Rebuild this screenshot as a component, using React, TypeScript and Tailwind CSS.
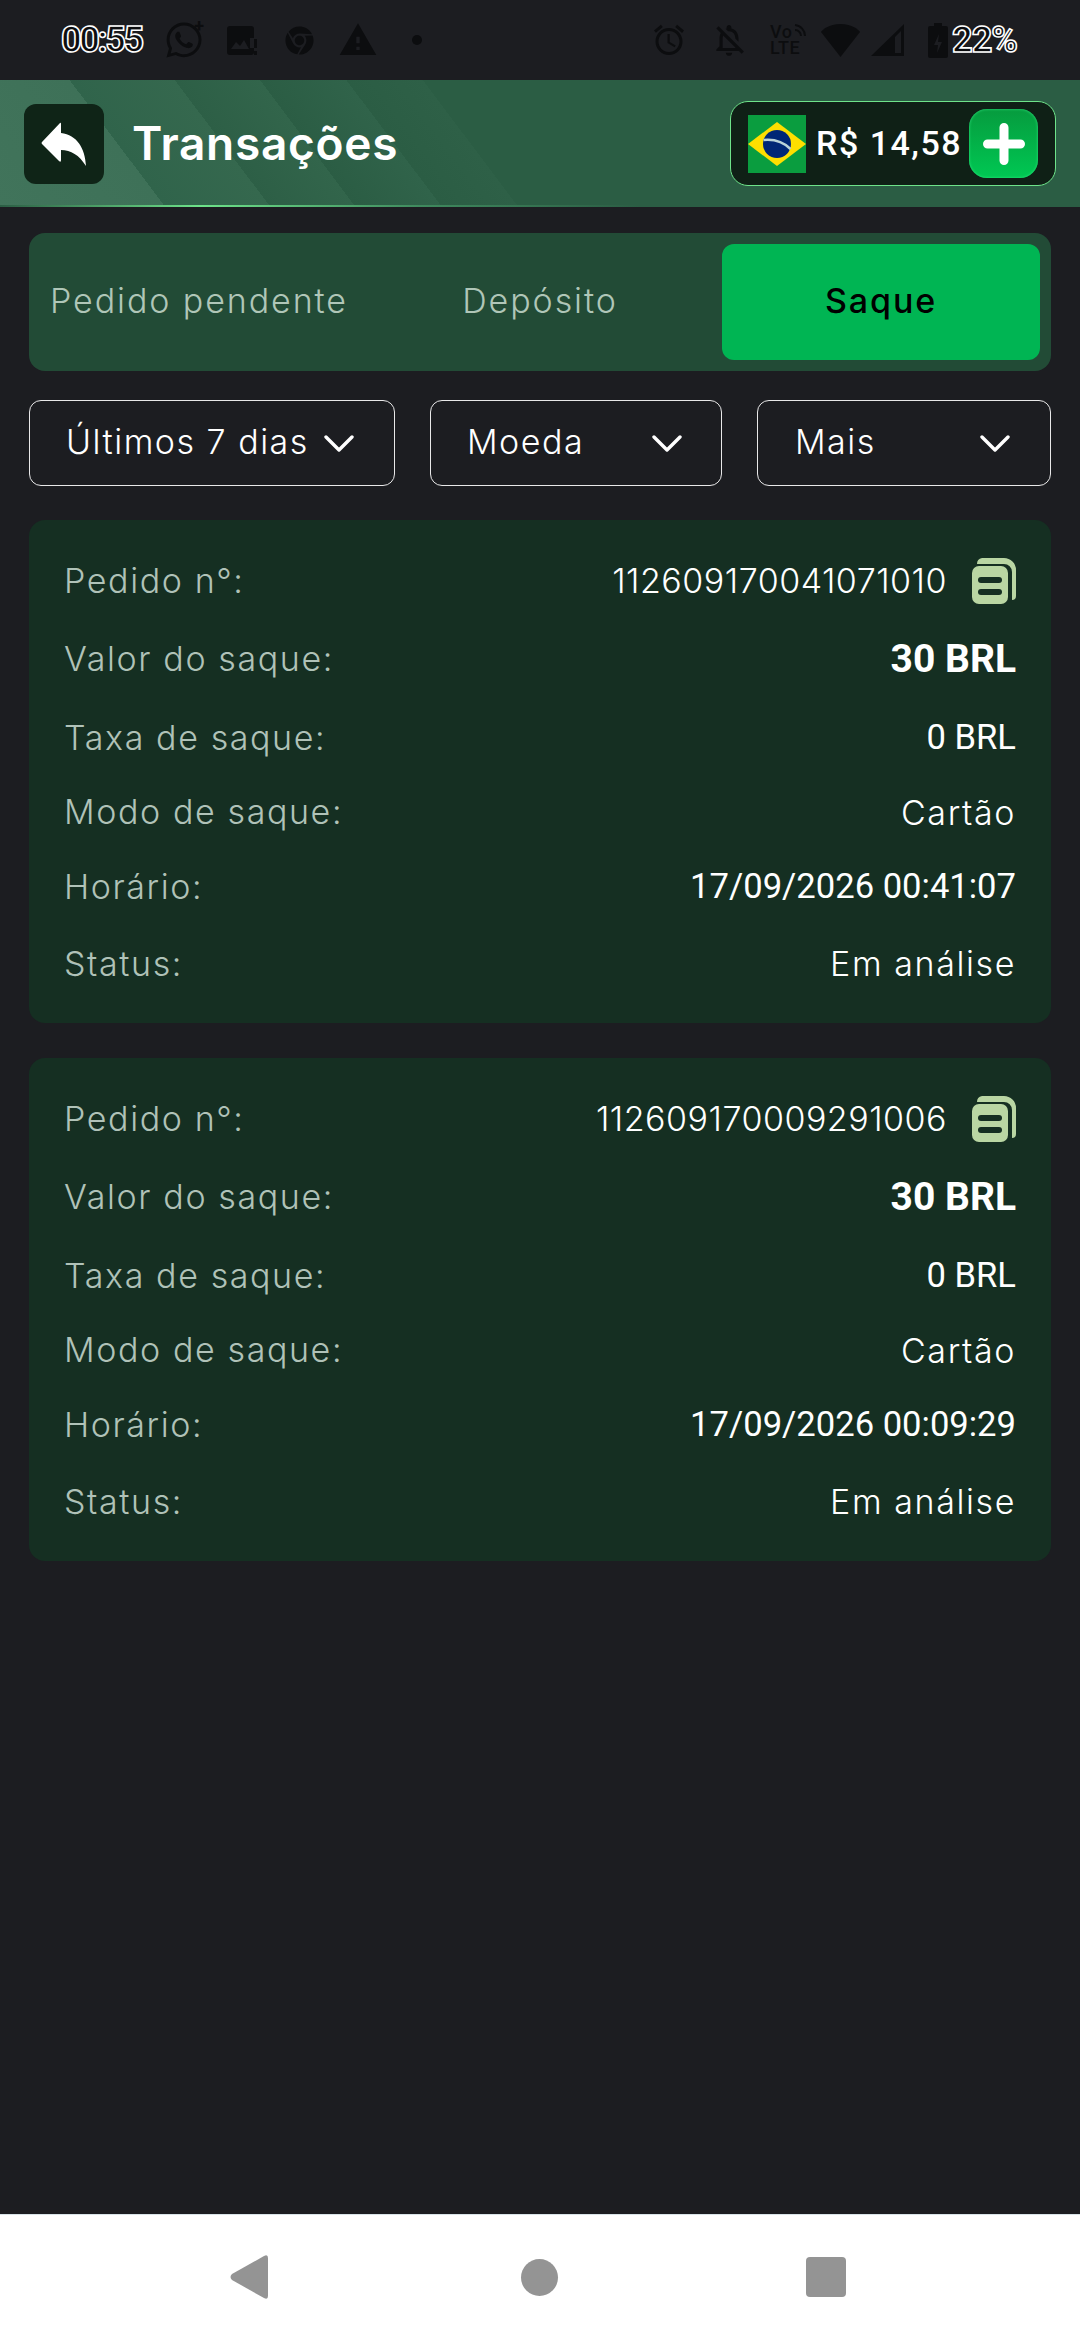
import { MdAlarm, MdOutlineNotificationsOff, MdWarning } from 'react-icons/md';
import { FaChrome, FaWhatsapp } from 'react-icons/fa';

const orders = [
  { id: '112609170041071010', time: '17/09/2026 00:41:07' },
  { id: '112609170009291006', time: '17/09/2026 00:09:29' },
];

function StatusBar() {
  return (
    <div className="h-[80px] flex items-center pl-[61px] pr-[61px] text-[#0c0d0f] font-['Roboto',sans-serif]">
      <span className="w-[80px] text-[36px] leading-[40px] font-bold tracking-[-2.4px] whitespace-nowrap [-webkit-text-stroke:1.6px_white]">00:55</span>
      <div className="relative ml-[25px] w-[36px] h-[40px]">
        <FaWhatsapp className="w-[36px] h-[40px]" />
        <span className="absolute -right-[2px] -top-[3px] text-[18px] leading-[18px] font-bold">+</span>
      </div>
      <svg className="ml-[25px]" width="30" height="29" viewBox="0 0 30 29" fill="currentColor">
        <path d="M3 0h21a3 3 0 0 1 3 3v9h-4v10h4v4a3 3 0 0 1-3 3H3a3 3 0 0 1-3-3V3a3 3 0 0 1 3-3z" />
        <path d="M4 23l5-7 4 4 4-6 5 9z" fill="#1c1d21" />
        <rect x="27" y="13" width="3" height="9" />
        <rect x="27" y="25" width="3" height="4" />
      </svg>
      <FaChrome className="ml-[28px] w-[29px] h-[29px]" />
      <MdWarning className="ml-[24px] w-[40px] h-[40px]" />
      <span className="ml-[34px] w-[10px] h-[10px] rounded-full bg-current" />
      <div className="flex-1" />
      <MdAlarm className="w-[36px] h-[36px]" />
      <MdOutlineNotificationsOff className="ml-[23px] w-[38px] h-[38px]" />
      <div className="relative ml-[22px] w-[36px] h-[32px]">
        <span className="block text-[18px] leading-[16px] font-medium tracking-[0.5px]">
          Vo
          <br />
          LTE
        </span>
        <svg className="absolute right-0 top-0" width="12" height="13" viewBox="0 0 12 13" fill="none" stroke="currentColor" strokeWidth="2">
          <path d="M1 6a6 6 0 0 1 6 6M1 1a11 11 0 0 1 10 11" />
        </svg>
      </div>
      <svg className="ml-[15px]" width="39" height="33" viewBox="0 0 39 33" fill="currentColor">
        <path d="M19.5 0C31 0 38 6 39 8L19.5 33 0 8C1 6 8 0 19.5 0z" />
      </svg>
      <svg className="ml-[11px]" width="33" height="32" viewBox="0 0 33 32" fill="currentColor">
        <path d="M33 0v32H0zM30 7L24 13v16h6z" fillRule="evenodd" />
      </svg>
      <svg className="ml-[24px]" width="20" height="35" viewBox="0 0 20 35" fill="currentColor">
        <path d="M6 0h8v3h4a2 2 0 0 1 2 2v28a2 2 0 0 1-2 2H2a2 2 0 0 1-2-2V5a2 2 0 0 1 2-2h4z" />
        <path d="M11 11l-5 11h4l-1 8 5-11h-4z" fill="#1c1d21" />
      </svg>
      <span className="ml-[4px] w-[67px] text-[36px] leading-[40px] font-bold tracking-[-1px] whitespace-nowrap [-webkit-text-stroke:1.6px_white]">22%</span>
    </div>
  );
}

function BrazilFlag() {
  return (
    <svg width="58" height="58" viewBox="0 0 58 58" className="shrink-0">
      <rect width="58" height="58" fill="#0a9d3f" />
      <path d="M29 7l29 22-29 22L0 29z" fill="#fedf00" />
      <circle cx="29" cy="29" r="14" fill="#002776" />
      <path d="M15.5 25c10-1 20 2 27 9" stroke="#b9d3d8" strokeWidth="2.5" fill="none" />
    </svg>
  );
}

function Header() {
  return (
    <div className="relative h-[127px] flex items-center pl-[24px] pr-[24px] bg-[linear-gradient(53deg,#41745b_0,#3e7158_132px,#30644b_132px,#35684e_216px,#2d5f46_216px,#32654b_284px,#2b5d44_284px,#30634a_353px,#2b5d44_353px,#2e6047_414px,#2b5d44_414px)]">
      <button className="w-[80px] h-[80px] rounded-[12px] bg-[#0f2417] flex items-center justify-center">
        <svg width="46" height="44" viewBox="0 0 46 44" fill="white">
          <path d="M19 1Q20 0 20 2L20 11C36 13 44 26 45 44C38 33 30 28 20 28L20 38Q20 41 18 39L1 22Q0 21 1 20Z" />
        </svg>
      </button>
      <h1 className="ml-[28px] pb-[2px] text-[46px] leading-[50px] font-semibold tracking-[0.7px] text-white">Transações</h1>
      <div className="ml-auto w-[326px] h-[85px] rounded-[18px] border border-[#6ee38a] bg-[#0f2016] flex items-center pl-[17px]">
        <BrazilFlag />
        <span className="ml-[10px] w-[153px] font-['Roboto',sans-serif] font-medium text-[34px] tracking-[1.5px] text-white whitespace-nowrap">R$ 14,58</span>
        <div className="w-[69px] h-[69px] rounded-[18px] bg-[linear-gradient(180deg,#069b3e,#00c853)] shadow-[inset_0_0_3px_#2fe67f] flex items-center justify-center">
          <svg width="42" height="42" viewBox="0 0 42 42" stroke="white" strokeWidth="9" strokeLinecap="round">
            <path d="M21 4.5v33M4.5 21h33" />
          </svg>
        </div>
      </div>
      <div className="absolute left-0 right-0 bottom-0 h-[2px] bg-[linear-gradient(90deg,#2b5d44_0,#6ee38a_200px,#3f8a5e_420px,#2b5d44_640px)]" />
    </div>
  );
}

function Tabs() {
  return (
    <div className="mt-[26px] h-[138px] rounded-[16px] bg-[#224b36] p-[11px] grid grid-cols-3 gap-[23px] text-[34px] font-[350] text-[#b0c6b8] tracking-[1.9px]">
      <div className="flex items-center justify-center pb-[3px] whitespace-nowrap">Pedido pendente</div>
      <div className="flex items-center justify-center pb-[3px]">Depósito</div>
      <div className="flex items-center justify-center pb-[3px] rounded-[12px] bg-[#00b553] text-black font-medium">Saque</div>
    </div>
  );
}

function Chevron() {
  return (
    <svg width="30" height="18" viewBox="0 0 30 18" fill="none" stroke="white" strokeWidth="3.4" strokeLinecap="round" strokeLinejoin="round" className="shrink-0">
      <path d="M2 3l13 13L28 3" />
    </svg>
  );
}

function Dropdown({ label, className }: { label: string; className: string }) {
  return (
    <div className={`h-[86px] rounded-[12px] border border-white/90 flex items-center justify-between text-[34px] font-[350] tracking-[1.5px] text-white ${className}`}>
      <span className="pb-[3px] whitespace-nowrap">{label}</span>
      <Chevron />
    </div>
  );
}

function CopyIcon() {
  return (
    <svg width="44" height="46" viewBox="0 0 44 46" className="shrink-0" fill="#b9d6a3">
      <path d="M10 0h22a12 12 0 0 1 12 12v26a4 4 0 0 1-4 4V14a8 8 0 0 0-8-8H5a6 6 0 0 1 5-6z" />
      <rect x="0" y="8" width="36" height="38" rx="7" />
      <rect x="6" y="19" width="24" height="6" rx="3" fill="#152f22" />
      <rect x="6" y="31" width="24" height="6" rx="3" fill="#152f22" />
    </svg>
  );
}

function Row({ label, className = '', children }: { label: string; className?: string; children: React.ReactNode }) {
  return (
    <div className={`flex items-center justify-between ${className}`}>
      <span className="pb-[1px] text-[#b0c2b8] text-[34px] font-[350] tracking-[1.6px] whitespace-nowrap">{label}</span>
      {children}
    </div>
  );
}

function OrderCard({ id, time }: { id: string; time: string }) {
  const roboto = "font-['Roboto',sans-serif] text-[34.6px] text-white whitespace-nowrap";
  const value = 'text-[34px] font-[350] tracking-[1.6px] text-white whitespace-nowrap';
  return (
    <div className="rounded-[16px] bg-[#152f22] pl-[35px] pr-[35px] pt-[36px] pb-[35px] flex flex-col gap-[25px]">
      <Row label="Pedido n°:" className="h-[49px]">
        <div className="flex items-center gap-[25px]">
          <span className="pb-[1px] text-[34px] font-[350] tracking-[0.5px] text-white">{id}</span>
          <CopyIcon />
        </div>
      </Row>
      <Row label="Valor do saque:" className="h-[58px]">
        <span className="font-['Roboto',sans-serif] font-bold text-[39px] text-white">30 BRL</span>
      </Row>
      <Row label="Taxa de saque:" className="h-[49px]">
        <span className={roboto}>0 BRL</span>
      </Row>
      <Row label="Modo de saque:" className="h-[50px]">
        <span className={value}>Cartão</span>
      </Row>
      <Row label="Horário:" className="h-[49px]">
        <span className={roboto}>{time}</span>
      </Row>
      <Row label="Status:" className="h-[49px] mt-[3px]">
        <span className={value}>Em análise</span>
      </Row>
    </div>
  );
}

function NavBar() {
  return (
    <div className="h-[126px] bg-white border-t border-[#d8e3e8] flex items-center pl-[230px] pb-[1px]">
      <svg width="38" height="44" viewBox="0 0 38 44" fill="#949494">
        <path d="M34 1Q38 -1 38 3V41Q38 45 34 43L2 25Q-1 22 2 19Z" />
      </svg>
      <div className="ml-[253px] w-[37px] h-[37px] rounded-full bg-[#949494]" />
      <div className="ml-[248px] w-[40px] h-[40px] rounded-[4px] bg-[#949494]" />
    </div>
  );
}

export default function App() {
  return (
    <div className="w-[1080px] h-[2340px] flex flex-col bg-[#1c1d21] font-['Inter',sans-serif] overflow-hidden">
      <StatusBar />
      <Header />
      <main className="flex-1 px-[29px]">
        <Tabs />
        <div className="mt-[29px] flex gap-[35px]">
          <Dropdown label="Últimos 7 dias" className="w-[366px] pl-[36px] pr-[40px]" />
          <Dropdown label="Moeda" className="w-[292px] pl-[36px] pr-[39px]" />
          <Dropdown label="Mais" className="w-[294px] pl-[37px] pr-[40px]" />
        </div>
        <div className="mt-[34px] flex flex-col gap-[35px]">
          {orders.map((o) => (
            <OrderCard key={o.id} id={o.id} time={o.time} />
          ))}
        </div>
      </main>
      <NavBar />
    </div>
  );
}
